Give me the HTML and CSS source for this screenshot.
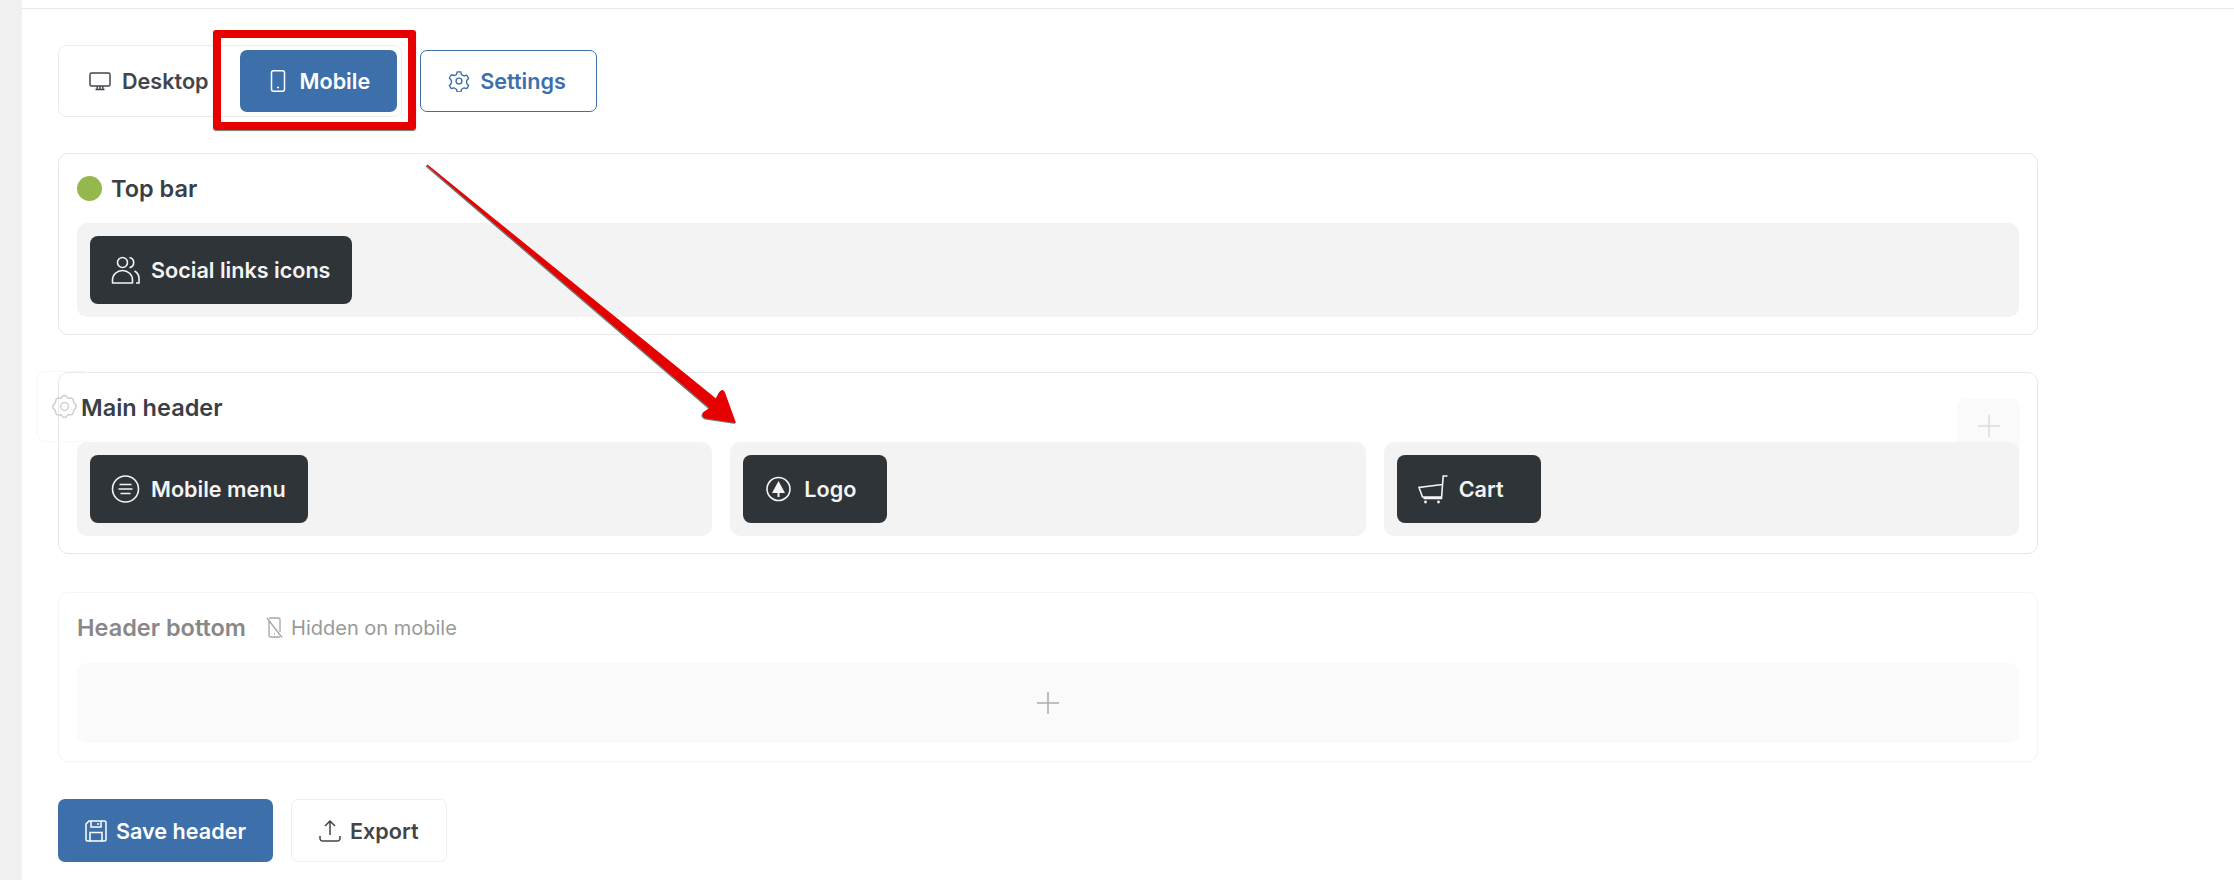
FILE: index.html
```html
<!DOCTYPE html>
<html lang="en">
<head>
  <meta charset="UTF-8">
  <title>Header builder</title>
  <link rel="stylesheet" href="styles.css">
</head>
<body>
  <div class="sidebar"></div>

  <main class="page">
    <div class="topline"></div>

    <div class="builder">
      <div class="tab-row">
        <div class="tabs">
          <div class="tab">
            <svg class="icon" viewBox="0 0 22 22"><rect x="1" y="3" width="20" height="13" rx="1.5"/><path d="M11 16v3M6.5 19.5h9M8.5 16l-.5 3M13.5 16l.5 3"/></svg>
            Desktop
          </div>
          <div class="tab active">
            <svg class="icon" viewBox="0 0 22 22"><rect x="4.5" y="0.8" width="13" height="20.4" rx="2"/><path d="M10 17.5h2"/></svg>
            Mobile
          </div>
        </div>
        <div class="settings-btn">
          <svg class="icon" viewBox="0 0 24 24"><circle cx="12" cy="12" r="3.2"/><path d="M10 2h4l.8 3 2.7 1.500 3-.8 2 3.500-2.200 2.300v3l2.200 2.300-2 3.500-3-.8-2.700 1.500-.8 3h-4l-.8-3-2.700-1.500-3 .8-2-3.500 2.200-2.300v-3L1.500 8.700l2-3.500 3 .8L9.200 5z" stroke-linejoin="round"/></svg>
          Settings
        </div>
      </div>

      <section class="panel">
        <h3 class="panel-title"><span class="status-dot"></span>Top bar</h3>
        <div class="zones">
          <div class="zone">
            <div class="chip">
              <svg class="chip-icon" viewBox="0 0 28 28"><circle cx="11" cy="6.500" r="5"/><path d="M1 27v-3a10 9.500 0 0 1 20 0v3z" stroke-linejoin="round"/><path d="M18 1.500a5.200 5.200 0 0 1 0 10.200M23 15a9 9 0 0 1 4.500 8.500V27h-3"/></svg>
              Social links icons
            </div>
          </div>
        </div>
      </section>

      <section class="panel">
        <div class="ghost-gear">
          <svg class="ghost-gear-icon" viewBox="0 0 24 24"><circle cx="12" cy="12" r="3.800"/><path d="M10.500 1.800q1.500-1 3 0l1.800 2.200 2.800-.2q1.700.2 2.300 1.800l.4 2.600 2 2q.8 1.800 0 3.400l-2 2-.4 2.600q-.6 1.600-2.300 1.800l-2.800-.2-1.800 2.200q-1.500 1-3 0L8.700 20l-2.800.2q-1.700-.2-2.300-1.800l-.4-2.600-2-2q-.8-1.600 0-3.400l2-2 .4-2.600Q4.200 4 5.900 3.800L8.700 4z" stroke-linejoin="round"/></svg>
        </div>
        <div class="ghost-add">
          <svg class="ghost-add-icon" viewBox="0 0 24 24"><path d="M12 1v22M1 12h22"/></svg>
        </div>
        <h3 class="panel-title indented">Main header</h3>
        <div class="zones">
          <div class="zone">
            <div class="chip">
              <svg class="chip-icon" viewBox="0 0 28 28"><circle cx="14" cy="14" r="13"/><path d="M8 9.500h12M7 14h14M9 18.500h10"/></svg>
              Mobile menu
            </div>
          </div>
          <div class="zone">
            <div class="chip">
              <svg class="chip-icon" viewBox="0 0 28 28"><circle cx="14" cy="14" r="11.500"/><path class="solid" d="M14 6l6.500 12H15v4h-2v-4H7.500z"/></svg>
              Logo
            </div>
          </div>
          <div class="zone">
            <div class="chip">
              <svg class="chip-icon wide" viewBox="0 0 30 29"><path d="M29.500 1h-4.300L23.500 23.500H5.500M24.300 9.500L1 12.500l3.500 9.500h19"/><circle class="solid" cx="7.500" cy="27" r="1.400"/><circle class="solid" cx="20.500" cy="27" r="1.400"/></svg>
              Cart
            </div>
          </div>
        </div>
      </section>

      <section class="panel faded">
        <h3 class="panel-title">
          Header bottom
          <span class="hidden-note">
            <svg class="note-icon" viewBox="0 0 17 21"><path d="M3 1h9.500a1.500 1.500 0 0 1 1.500 1.500V15M14 20H4.500A1.500 1.500 0 0 1 3 18.500V4M1 1l15 19.500M8 17h1"/></svg>
            Hidden on mobile
          </span>
        </h3>
        <div class="zone empty">
          <svg class="add-icon" viewBox="0 0 24 24"><path d="M12 1v22M1 12h22"/></svg>
        </div>
      </section>

      <div class="actions">
        <div class="btn primary">
          <svg class="icon" viewBox="0 0 22 22"><path d="M1 4l3-3h15.500A1.500 1.500 0 0 1 21 2.500v17a1.500 1.500 0 0 1-1.500 1.500h-17A1.500 1.500 0 0 1 1 19.500zM6 1v6h10V1M13 3v2M5 21v-8.500h12V21"/></svg>
          Save header
        </div>
        <div class="btn outline">
          <svg class="icon" viewBox="0 0 22 22"><path d="M11 15V1.500M6 6l5-5 5 5M1 16v2.500A2.500 2.500 0 0 0 3.500 21h15a2.500 2.500 0 0 0 2.500-2.500V16"/></svg>
          Export
        </div>
      </div>
    </div>
  </main>

  <!-- screenshot annotations drawn over the page -->
  <div class="callout-box"></div>
  <svg class="callout-arrow" viewBox="0 0 2234 880">
    <path d="M426.500 165.500L427.500 164.500L716 398.500L719.500 392Q722.500 388 725 392.500L736 423L706 418.500Q700.500 416.500 703.500 412L709.500 408Z"/>
  </svg>
</body>
</html>
```

FILE: styles.css
```css
* {
  margin: 0;
  padding: 0;
  box-sizing: border-box;
}

body {
  font-family: 'Inter', 'Liberation Sans', sans-serif;
  background-color: #fff;
  color: #3a3f47;
  height: 100vh;
  overflow: hidden;
  display: flex;
}

.sidebar {
  width: 22px;
  flex-shrink: 0;
  background-color: #f0f0f0;
}

.page {
  flex: 1;
}

.topline {
  height: 9px;
  border-bottom: 1px solid #e8e8e8;
}

.builder {
  width: 1980px;
  margin-left: 36px;
  padding-top: 36px;
}

.tab-row {
  display: flex;
  align-items: center;
  gap: 18px;
  margin-bottom: 36px;
}

.tabs {
  display: flex;
  gap: 4px;
  padding: 4px 4px 4px 3px;
  border: 1px solid #ececec;
  border-radius: 8px;
}

.tab,
.settings-btn,
.btn {
  height: 62px;
  padding: 0 27px;
  display: flex;
  align-items: center;
  border-radius: 7px;
  font-size: 21.600px;
  font-weight: 600;
}

.btn {
  height: 63px;
}

.tab {
  gap: 11px;
  color: #41454c;
}

.tab.active {
  background-color: #3d70ab;
  color: #fff;
}

.settings-btn {
  gap: 10px;
  padding-right: 30px;
  color: #3d70ab;
  border: 1px solid #3d70ab;
}

.icon {
  width: 22px;
  height: 22px;
  fill: none;
  stroke: currentColor;
  stroke-width: 1.500;
  flex-shrink: 0;
}

.panel {
  position: relative;
  height: 182px;
  margin-bottom: 37px;
  padding: 18px 18px 17px;
  border: 1px solid #e8e8e8;
  border-radius: 10px;
}

.panel-title {
  height: 33px;
  margin-bottom: 18px;
  display: flex;
  align-items: center;
  font-size: 23.500px;
  font-weight: 600;
}

.panel-title.indented {
  padding-left: 4px;
}

.status-dot {
  width: 25px;
  height: 25px;
  margin-right: 9px;
  border-radius: 50%;
  background-color: #94b84e;
}

.zones {
  position: relative;
  display: grid;
  grid-auto-flow: column;
  grid-auto-columns: 1fr;
  gap: 18px;
}

.zone {
  height: 94px;
  padding: 13px;
  background-color: #f3f3f3;
  border-radius: 10px;
  display: flex;
}

.chip {
  min-width: 144px;
  padding: 0 22px 0 21px;
  display: flex;
  align-items: center;
  gap: 11px;
  background-color: #2f3438;
  border-radius: 8px;
  color: #f4f4f4;
  font-size: 21.600px;
  font-weight: 600;
}

.chip-icon {
  width: 29px;
  height: 28px;
  fill: none;
  stroke: currentColor;
  stroke-width: 1.600;
  flex-shrink: 0;
}

.chip-icon .solid {
  fill: currentColor;
  stroke: none;
}

.chip-icon.wide {
  width: 30px;
  height: 29px;
}

.ghost-gear {
  position: absolute;
  left: -22px;
  top: -2px;
  width: 55px;
  height: 71px;
  display: flex;
  align-items: center;
  justify-content: flex-end;
  padding-right: 14px;
  border: 1px solid #f8f8f8;
  border-right-color: transparent;
  border-radius: 8px;
}

.ghost-gear-icon {
  width: 25px;
  height: 27px;
  fill: none;
  stroke: #d0d0d0;
  stroke-width: 1.500;
}

.ghost-add {
  position: absolute;
  right: 17px;
  top: 26px;
  width: 63px;
  height: 63px;
  padding-top: 15px;
  display: flex;
  justify-content: center;
  align-items: flex-start;
  background-color: #fafafa;
  border-radius: 8px;
}

.ghost-add-icon {
  width: 24px;
  height: 24px;
  fill: none;
  stroke: #dcdcdc;
  stroke-width: 1.500;
}

.panel.faded {
  height: 170px;
  margin-top: 38px;
  border-color: #f4f4f4;
}

.faded .panel-title {
  color: #888;
  margin-bottom: 19px;
}

.hidden-note {
  margin-left: 20px;
  display: flex;
  align-items: center;
  gap: 8px;
  font-size: 20px;
  font-weight: 400;
  color: #999;
}

.note-icon {
  width: 17px;
  height: 21px;
  fill: none;
  stroke: #a5a5a5;
  stroke-width: 1.300;
}

.zone.empty {
  height: 80px;
  background-color: #fafafa;
  align-items: center;
  justify-content: center;
}

.add-icon {
  width: 24px;
  height: 24px;
  fill: none;
  stroke: #aaa;
  stroke-width: 1.500;
}

.actions {
  display: flex;
  gap: 18px;
}

.btn {
  gap: 9px;
}

.btn.primary {
  background-color: #3d70ab;
  color: #fff;
}

.btn.outline {
  color: #444;
  border: 1px solid #efefef;
}

.callout-box {
  position: absolute;
  left: 213px;
  top: 30px;
  width: 203px;
  height: 100px;
  border: 8px solid #e60000;
  border-radius: 3px;
  box-shadow: 0 1px 1px #777;
}

.callout-arrow {
  position: absolute;
  left: 0;
  top: 0;
  width: 2234px;
  height: 880px;
  fill: #e60000;
  filter: drop-shadow(-0.5px 1px 0.5px #777);
}
```
